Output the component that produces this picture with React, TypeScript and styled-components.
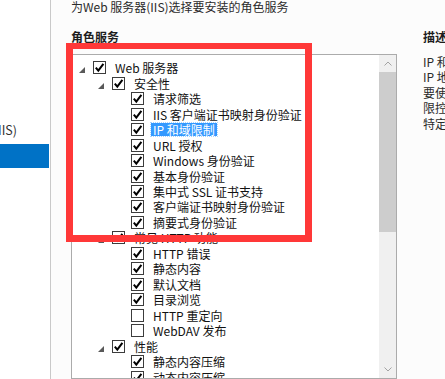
import React from "react";
import styled, { createGlobalStyle } from "styled-components";

const GlobalStyle = createGlobalStyle`
  html, body {
    margin: 0;
    padding: 0;
    overflow: hidden;
    background: #fcfcfc;
  }
  body {
    font-family: "Noto Sans CJK SC", "Noto Sans", sans-serif;
    font-size: 12px;
    color: #111;
  }
`;

const ROW = 15.47;

const Page = styled.div`
  position: relative;
  display: flex;
  width: 445px;
  height: 379px;
  overflow: hidden;
`;

const Nav = styled.nav`
  width: 50px;
  flex: none;
  background: #fff;
  border-right: 1px solid #c9c9c9;
  padding-top: 121px;
`;

const NavItem = styled.div<{ active?: boolean }>`
  height: ${(p) => (p.active ? 24 : 17)}px;
  width: ${(p) => (p.active ? 49 : 17)}px;
  display: flex;
  justify-content: flex-end;
  align-items: center;
  overflow: hidden;
  white-space: nowrap;
  color: #333;
  font-size: 12.5px;
  background: ${(p) => (p.active ? "#0072c6" : "transparent")};
  margin-bottom: ${(p) => (p.active ? 0 : 6)}px;
`;

const Main = styled.section`
  flex: none;
  width: 326px;
  padding-left: 20px;
  display: flex;
  flex-direction: column;
`;

const Intro = styled.div`
  line-height: 14px;
  color: #2b2b2b;
  white-space: nowrap;
`;

const Title = styled.div`
  font-weight: bold;
  line-height: 14px;
  color: #1e1e1e;
  white-space: nowrap;
`;

const MainTitle = styled(Title)`
  margin-top: 16px;
`;

const ListBox = styled.div`
  margin-top: 10px;
  height: 330px;
  border: 1px solid #ababab;
  background: #fff;
  display: flex;
  overflow: hidden;
`;

const Tree = styled.ul`
  list-style: none;
  margin: 0;
  padding: 5px 0 0;
  flex: 1;
  overflow: hidden;
`;

const Row = styled.li<{ level: number }>`
  height: ${ROW}px;
  display: flex;
  align-items: center;
  padding-left: ${(p) => 7 + p.level * 19}px;
  white-space: nowrap;
`;

const Expander = styled.span`
  width: 14px;
  height: 13px;
  flex: none;
  display: flex;
  align-items: flex-end;
  padding-bottom: 1px;
  box-sizing: border-box;
`;

const Box = styled.span`
  width: 13px;
  height: 13px;
  flex: none;
  box-sizing: border-box;
  border: 1px solid #3c3c3c;
  background: #fff;
  display: flex;
  align-items: center;
  justify-content: center;
  margin-right: 9px;
`;

const Label = styled.span<{ selected?: boolean }>`
  line-height: 13px;
  padding: 0 2px;
  margin-left: -2px;
  color: ${(p) => (p.selected ? "#fff" : "#111")};
  background: ${(p) => (p.selected ? "#3399ff" : "transparent")};
  outline: ${(p) => (p.selected ? "1px dotted #a8d3ff" : "none")};
`;

const ScrollBar = styled.div`
  width: 17px;
  flex: none;
  display: flex;
  flex-direction: column;
  background: #f0f0f0;
`;

const ArrowButton = styled.div`
  height: 17px;
  flex: none;
  display: flex;
  align-items: center;
  justify-content: center;
`;

const Thumb = styled.div`
  height: 160px;
  flex: none;
  background: #cdcdcd;
`;

const Track = styled.div`
  flex: 1;
`;

const Description = styled.aside`
  margin-left: 26px;
  padding-top: 30px;
  flex: 1;
  min-width: 0;
  overflow: hidden;
`;

const DescText = styled.p`
  margin: 10px 0 0;
  line-height: ${ROW}px;
  white-space: nowrap;
  color: #2b2b2b;
`;

const Highlight = styled.div`
  position: absolute;
  left: 66px;
  top: 43px;
  width: 246px;
  height: 199px;
  box-sizing: border-box;
  border: 7px solid #ff3838;
  border-top-width: 6px;
  pointer-events: none;
`;

type Item = {
  level: number;
  label: string;
  expander?: boolean;
  checked?: boolean;
  selected?: boolean;
};

const items: Item[] = [
  { level: 0, label: "Web 服务器", expander: true, checked: true },
  { level: 1, label: "安全性", expander: true, checked: true },
  { level: 2, label: "请求筛选", checked: true },
  { level: 2, label: "IIS 客户端证书映射身份验证", checked: true },
  { level: 2, label: "IP 和域限制", checked: true, selected: true },
  { level: 2, label: "URL 授权", checked: true },
  { level: 2, label: "Windows 身份验证", checked: true },
  { level: 2, label: "基本身份验证", checked: true },
  { level: 2, label: "集中式 SSL 证书支持", checked: true },
  { level: 2, label: "客户端证书映射身份验证", checked: true },
  { level: 2, label: "摘要式身份验证", checked: true },
  { level: 1, label: "常见 HTTP 功能", expander: true, checked: true },
  { level: 2, label: "HTTP 错误", checked: true },
  { level: 2, label: "静态内容", checked: true },
  { level: 2, label: "默认文档", checked: true },
  { level: 2, label: "目录浏览", checked: true },
  { level: 2, label: "HTTP 重定向" },
  { level: 2, label: "WebDAV 发布" },
  { level: 1, label: "性能", expander: true, checked: true },
  { level: 2, label: "静态内容压缩", checked: true },
  { level: 2, label: "动态内容压缩", checked: true },
];

const Check = () => (
  <svg width="11" height="11" viewBox="0 0 11 11">
    <path d="M1.8 5.6 L4.3 8.6 L9.4 1.8" fill="none" stroke="#000" strokeWidth="2" />
  </svg>
);

const Triangle = () => (
  <svg width="6" height="6" viewBox="0 0 6 6">
    <polygon points="0,6 6,6 6,0" fill="#595959" />
  </svg>
);

const Chevron = ({ down }: { down?: boolean }) => (
  <svg width="8" height="5" viewBox="0 0 8 5">
    <path
      d={down ? "M0.5 0.5 L4 4 L7.5 0.5" : "M0.5 4.5 L4 1 L7.5 4.5"}
      fill="none"
      stroke="#a3a3a3"
      strokeWidth="1"
    />
  </svg>
);

const App = () => {
  return (
    <Page>
      <GlobalStyle />
      <Nav>
        <NavItem>Web 服务器(IIS)</NavItem>
        <NavItem active />
      </Nav>

      <Main>
        <Intro>为Web 服务器(IIS)选择要安装的角色服务</Intro>
        <MainTitle>角色服务</MainTitle>
        <ListBox>
          <Tree>
            {items.map((it) => (
              <Row key={it.label} level={it.level}>
                <Expander>{it.expander && <Triangle />}</Expander>
                <Box>{it.checked && <Check />}</Box>
                <Label selected={it.selected}>{it.label}</Label>
              </Row>
            ))}
          </Tree>
          <ScrollBar>
            <ArrowButton>
              <Chevron />
            </ArrowButton>
            <Thumb />
            <Track />
            <ArrowButton>
              <Chevron down />
            </ArrowButton>
          </ScrollBar>
        </ListBox>
      </Main>

      <Description>
        <Title>描述</Title>
        <DescText>
          IP 和域限制允许你根据请求的源
          <br />
          IP 地址或域名启用或拒绝内容访问。
          <br />
          要使用该功能，请配置允许或拒绝的权
          <br />
          限控制规则，以便只有来自
          <br />
          特定地址的客户端才能访问。
        </DescText>
      </Description>

      <Highlight />
    </Page>
  );
};

export default App;
